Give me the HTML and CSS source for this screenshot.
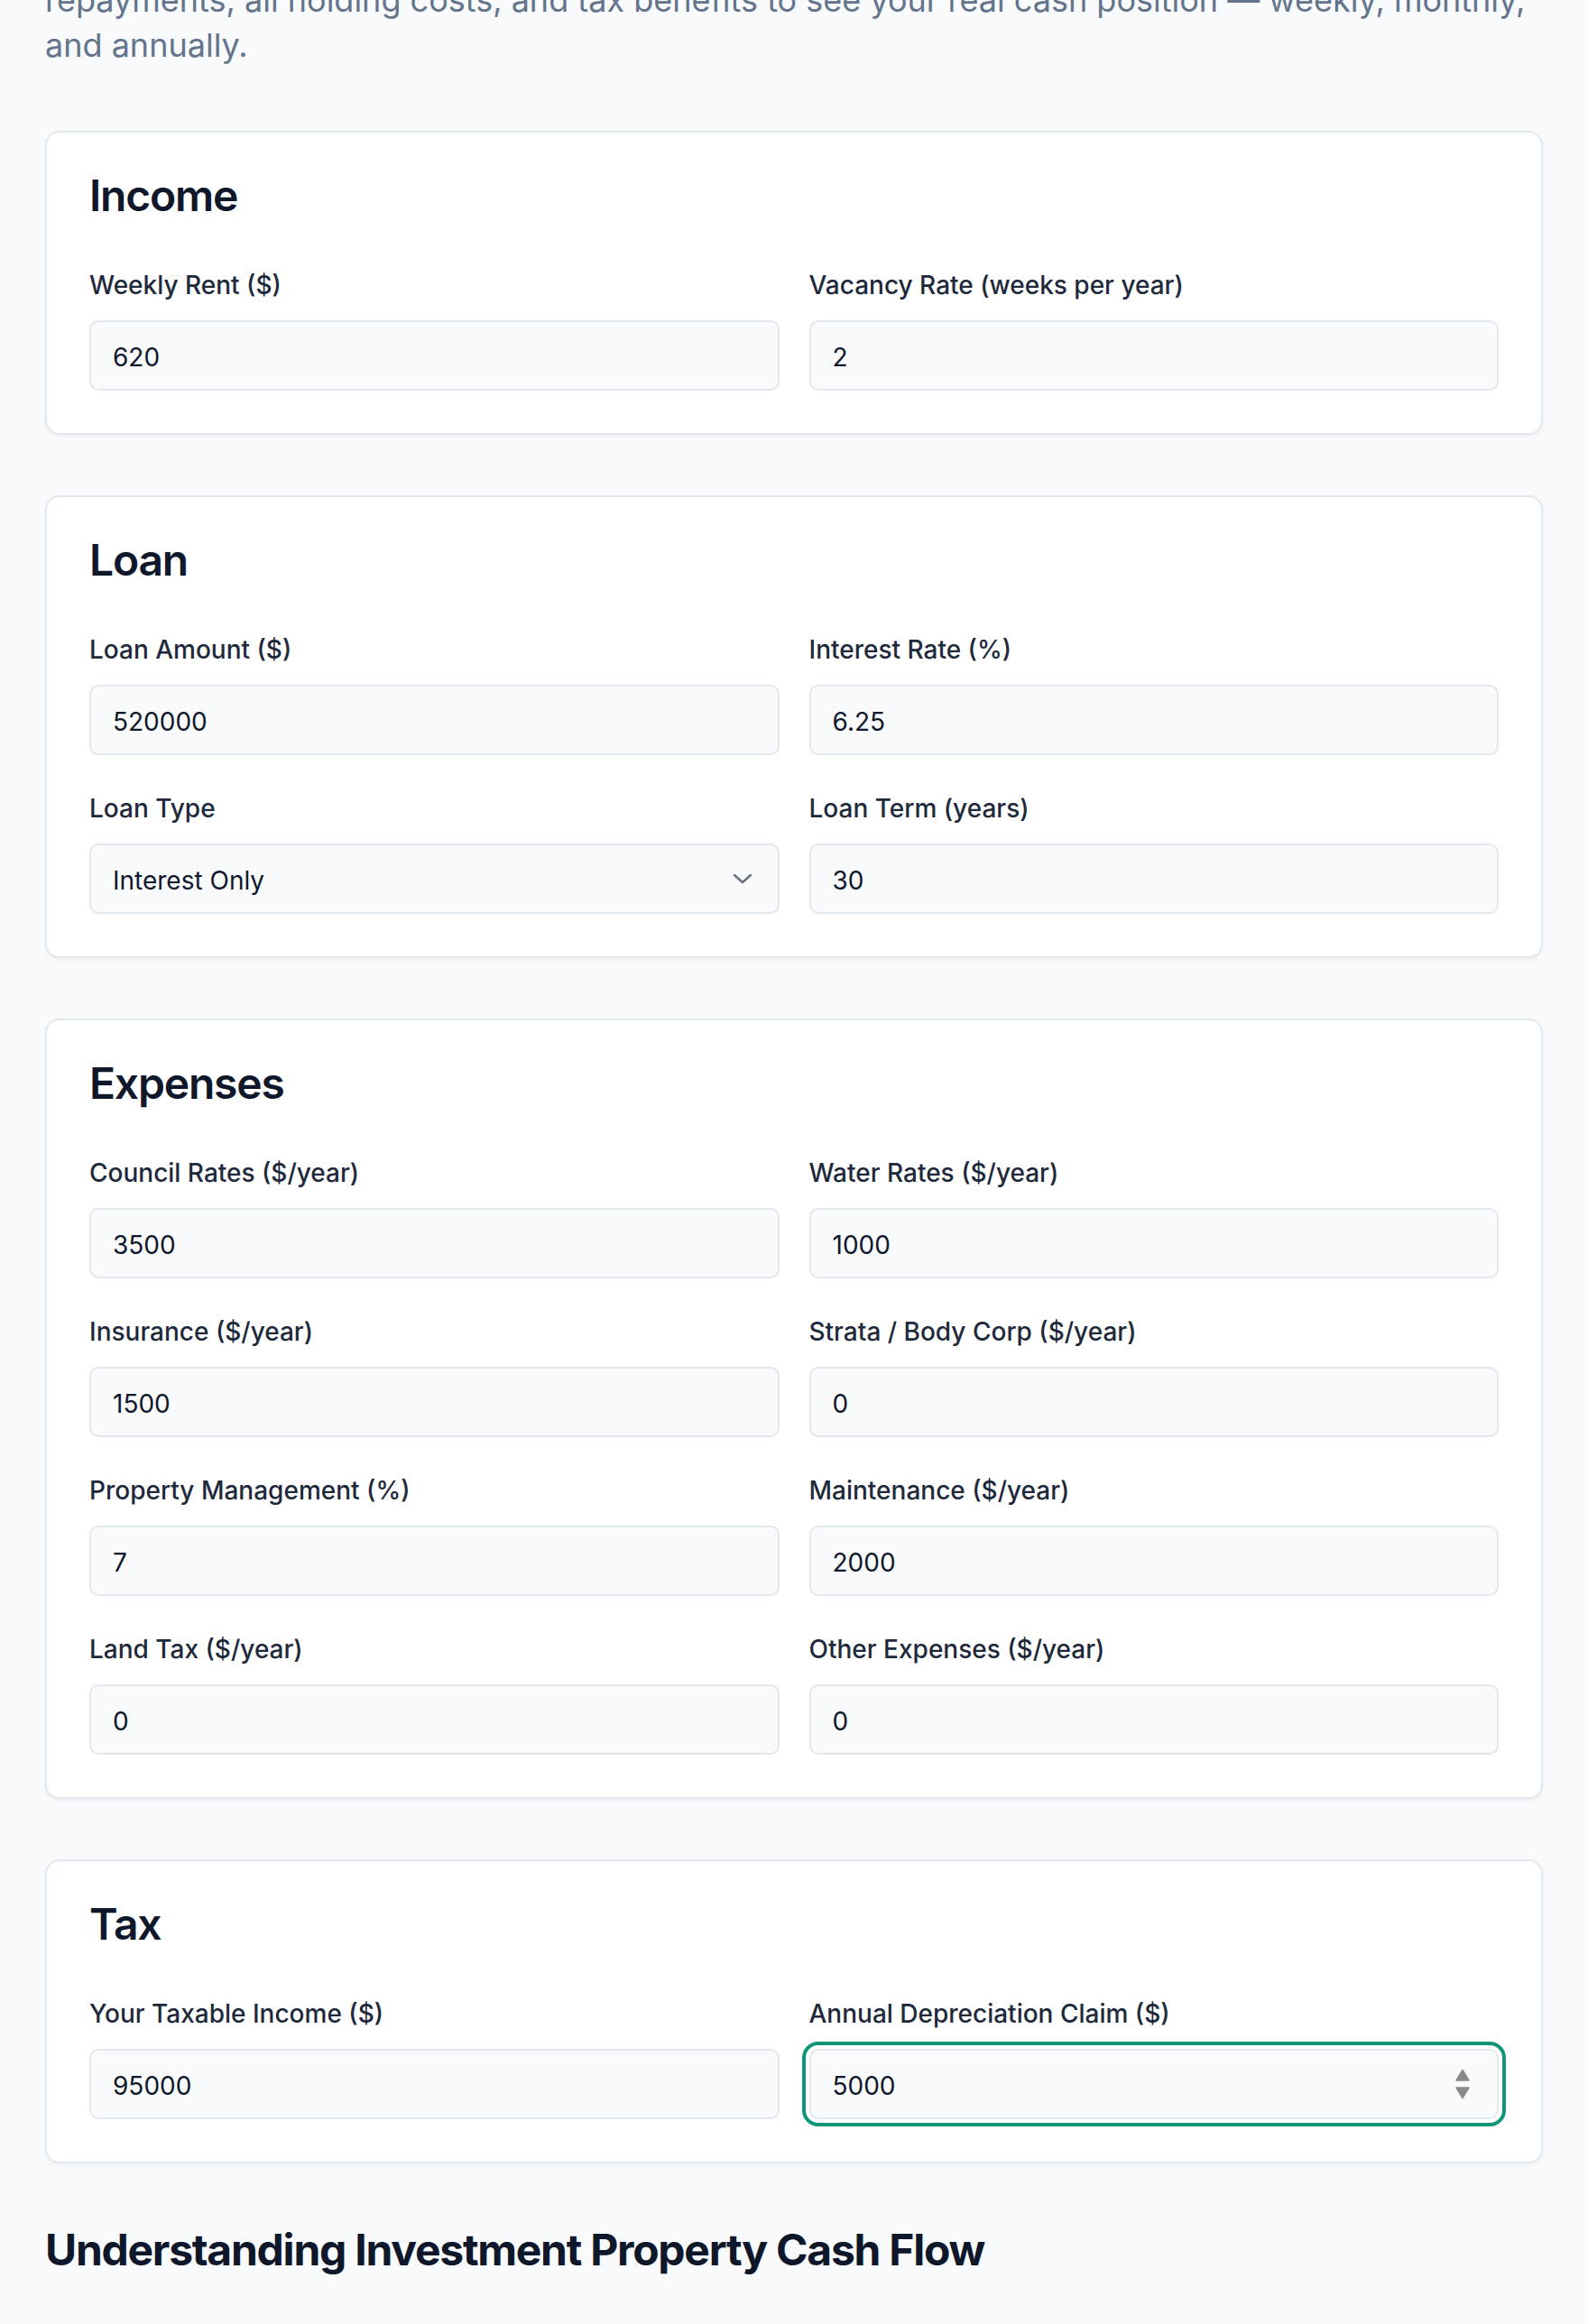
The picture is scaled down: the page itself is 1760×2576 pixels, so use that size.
FILE: index.html
```html
<!doctype html>
<html lang="en">
<head>
    <meta charset="UTF-8">
    <meta name="viewport" content="width=device-width, initial-scale=1.0">
    <title>Investment Property Cash Flow Calculator</title>
    <link rel="stylesheet" href="styles.css">
</head>
<body>
    <main class="page">
        <p class="intro">repayments, all holding costs, and tax benefits to see your real cash position — weekly, monthly,<br>and annually.</p>

        <section class="card">
            <h2 class="card-title">Income</h2>
            <div class="fields">
                <div class="field">
                    <label for="weeklyRent">Weekly Rent ($)</label>
                    <input class="input" id="weeklyRent" type="number" value="620">
                </div>
                <div class="field">
                    <label for="vacancy">Vacancy Rate (weeks per year)</label>
                    <input class="input" id="vacancy" type="number" value="2">
                </div>
            </div>
        </section>

        <section class="card">
            <h2 class="card-title">Loan</h2>
            <div class="fields">
                <div class="field">
                    <label for="loanAmount">Loan Amount ($)</label>
                    <input class="input" id="loanAmount" type="number" value="520000">
                </div>
                <div class="field">
                    <label for="interestRate">Interest Rate (%)</label>
                    <input class="input" id="interestRate" type="number" value="6.25">
                </div>
                <div class="field">
                    <label for="loanType">Loan Type</label>
                    <div class="control">
                        <select class="input select" id="loanType">
                            <option selected>Interest Only</option>
                            <option>Principal &amp; Interest</option>
                        </select>
                        <svg class="chevron" width="22" height="12" viewBox="0 0 22 12">
                            <path d="M2 2l9 8 9-8" fill="none" stroke="#6b7280" stroke-width="2.4" stroke-linecap="round" stroke-linejoin="round"/>
                        </svg>
                    </div>
                </div>
                <div class="field">
                    <label for="loanTerm">Loan Term (years)</label>
                    <input class="input" id="loanTerm" type="number" value="30">
                </div>
            </div>
        </section>

        <section class="card">
            <h2 class="card-title">Expenses</h2>
            <div class="fields">
                <div class="field">
                    <label for="council">Council Rates ($/year)</label>
                    <input class="input" id="council" type="number" value="3500">
                </div>
                <div class="field">
                    <label for="water">Water Rates ($/year)</label>
                    <input class="input" id="water" type="number" value="1000">
                </div>
                <div class="field">
                    <label for="insurance">Insurance ($/year)</label>
                    <input class="input" id="insurance" type="number" value="1500">
                </div>
                <div class="field">
                    <label for="strata">Strata / Body Corp ($/year)</label>
                    <input class="input" id="strata" type="number" value="0">
                </div>
                <div class="field">
                    <label for="management">Property Management (%)</label>
                    <input class="input" id="management" type="number" value="7">
                </div>
                <div class="field">
                    <label for="maintenance">Maintenance ($/year)</label>
                    <input class="input" id="maintenance" type="number" value="2000">
                </div>
                <div class="field">
                    <label for="landTax">Land Tax ($/year)</label>
                    <input class="input" id="landTax" type="number" value="0">
                </div>
                <div class="field">
                    <label for="other">Other Expenses ($/year)</label>
                    <input class="input" id="other" type="number" value="0">
                </div>
            </div>
        </section>

        <section class="card">
            <h2 class="card-title">Tax</h2>
            <div class="fields">
                <div class="field">
                    <label for="taxable">Your Taxable Income ($)</label>
                    <input class="input" id="taxable" type="number" value="95000">
                </div>
                <div class="field">
                    <label for="depreciation">Annual Depreciation Claim ($)</label>
                    <div class="control">
                        <input class="input is-focused" id="depreciation" type="number" value="5000">
                        <svg class="spinner" width="18" height="34" viewBox="0 0 18 34">
                            <path d="M9 1.5l7 11.5H2z" fill="#8a8a8a" stroke="#8a8a8a" stroke-width="1.5" stroke-linejoin="round"/>
                            <path d="M2 21h14L9 32.5z" fill="#8a8a8a" stroke="#8a8a8a" stroke-width="1.5" stroke-linejoin="round"/>
                        </svg>
                    </div>
                </div>
            </div>
        </section>

        <h2 class="section-title">Understanding Investment Property Cash Flow</h2>
    </main>
</body>
</html>
```

FILE: styles.css
```css
html {
    background-color: #f8fafc;
}
body {
    margin: 0;
    background-color: #f8fafc;
    font-family: Inter, "Noto Sans", sans-serif;
    color: #0f172a;
}
.page {
    padding: 0 50px;
}
.intro {
    margin: -25px 0 70px;
    font-size: 36px;
    line-height: 50px;
    color: #64748b;
}
.card {
    background: #ffffff;
    border: 2px solid #e2e8f0;
    border-radius: 16px;
    padding: 41px 47px 47.5px;
    margin-bottom: 67px;
    box-shadow: 0 2px 4px rgba(15, 23, 42, 0.05);
}
.card-title {
    margin: 0 0 49px;
    font-size: 48px;
    line-height: 1.2;
    font-weight: 600;
    letter-spacing: -1.2px;
}
.fields {
    display: grid;
    grid-template-columns: 1fr 1fr;
    column-gap: 33px;
    row-gap: 38px;
}
.field label {
    display: block;
    margin-bottom: 18px;
    font-size: 28px;
    line-height: 42px;
    font-weight: 500;
    color: #1e293b;
}
.input {
    display: block;
    box-sizing: border-box;
    width: 100%;
    height: 78px;
    margin: 0;
    padding: 4px 24px 0;
    border: 2px solid #e2e8f0;
    border-radius: 10px;
    background: #f8fafc;
    font-family: Inter, "Noto Sans", sans-serif;
    font-size: 28px;
    line-height: 42px;
    color: #0f172a;
    outline: none;
}
.input::-webkit-inner-spin-button,
.input::-webkit-outer-spin-button {
    -webkit-appearance: none;
    margin: 0;
}
.input[type=number] {
    -moz-appearance: textfield;
}
.select {
    -webkit-appearance: none;
    appearance: none;
}
.control {
    position: relative;
}
.chevron {
    position: absolute;
    right: 30px;
    top: 33px;
    pointer-events: none;
}
.is-focused {
    outline: 4px solid #0f9678;
    outline-offset: 4px;
}
.spinner {
    position: absolute;
    right: 31px;
    top: 22px;
    pointer-events: none;
}
.section-title {
    margin: 67px 0 0;
    font-size: 48px;
    line-height: 1.2;
    font-weight: 700;
    letter-spacing: -1.25px;
}
```
